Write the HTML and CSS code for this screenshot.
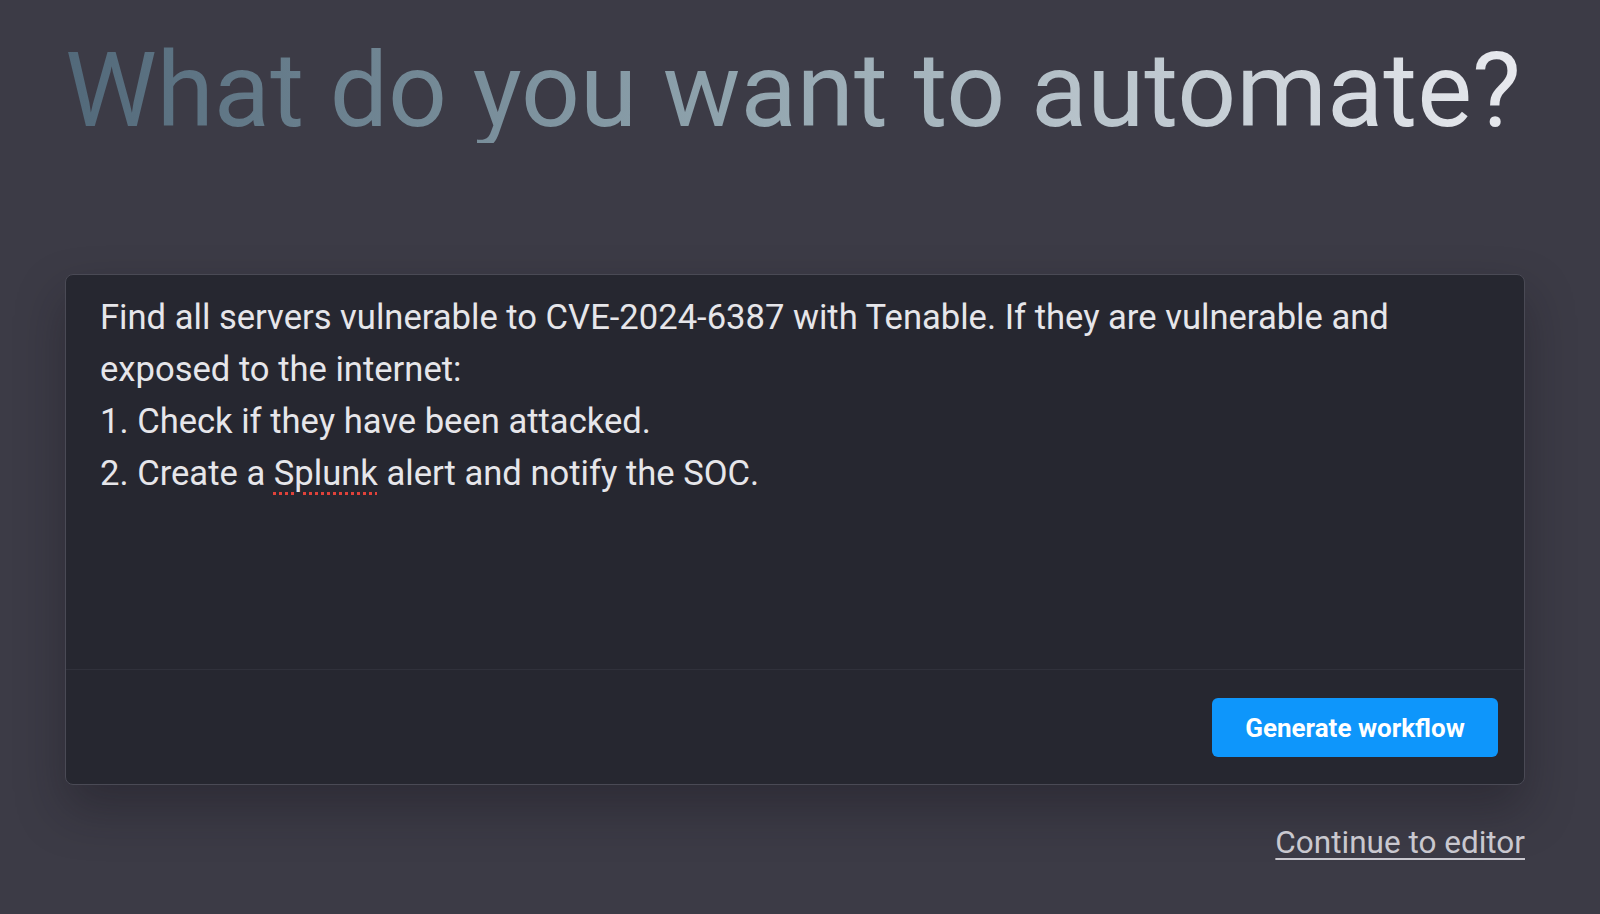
FILE: index.html
```html
<!DOCTYPE html>
<html lang="en">
<head>
<meta charset="utf-8">
<title>What do you want to automate?</title>
<link rel="stylesheet" href="styles.css">
</head>
<body>
<main class="page">
  <h1 class="title">What do you want to automate?</h1>
  <section class="card">
    <div class="prompt">
      <p class="line">Find all servers vulnerable to CVE-2024-6387 with Tenable. If they are vulnerable and exposed to the internet:</p>
      <p class="line">1. Check if they have been attacked.</p>
      <p class="line">2. Create a <span class="misspelled">Splunk</span> alert and notify the SOC.</p>
    </div>
    <div class="card-footer">
      <button class="btn-primary" type="button">Generate workflow</button>
    </div>
  </section>
  <div class="links">
    <a class="link" href="#">Continue to editor</a>
  </div>
</main>
</body>
</html>
```
FILE: styles.css
```css
* { box-sizing: border-box; }
html, body { margin: 0; padding: 0; }
body {
  background: #3c3b46;
  font-family: Roboto, "Liberation Sans", Arial, sans-serif;
  width: 1600px;
  height: 914px;
  overflow: hidden;
}
.page {
  padding: 38px 0 0 65px;
  width: 1525px;
}
.title {
  margin: 0;
  width: max-content;
  font-size: 103.5px;
  font-weight: 400;
  line-height: 105px;
  letter-spacing: 0;
  background: linear-gradient(90deg, #52697a 0%, #8fa3ad 45%, #e8e9ee 100%);
  -webkit-background-clip: text;
  background-clip: text;
  color: transparent;
  white-space: nowrap;
}
.card {
  margin-top: 131px;
  background: #262730;
  border: 1px solid #4a4a55;
  border-radius: 8px;
  box-shadow: 0 24px 48px rgba(20, 18, 26, 0.35);
  display: flex;
  flex-direction: column;
}
.prompt {
  height: 394px;
  padding: 16px 34px 0 34px;
  color: #e6e6ea;
  font-size: 34.6px;
  line-height: 52px;
}
.line { margin: 0; }
.misspelled {
  text-decoration: underline dotted #e0423a;
  text-decoration-thickness: 3px;
  text-underline-offset: 7px;
}
.card-footer {
  border-top: 1px solid #30313b;
  display: flex;
  justify-content: flex-end;
  padding: 28px 26px 27px 0;
}
.btn-primary {
  width: 286px;
  height: 59px;
  background: #0e96fb;
  color: #ffffff;
  border: none;
  border-radius: 6px;
  font-family: Roboto, "Liberation Sans", Arial, sans-serif;
  font-weight: 700;
  font-size: 26px;
  cursor: pointer;
}
.links {
  display: flex;
  justify-content: flex-end;
  margin-top: 41px;
}
.link {
  color: #c9c8cf;
  font-size: 31.5px;
  line-height: 34px;
  text-decoration: underline;
  text-decoration-thickness: 2px;
  text-underline-offset: 5px;
}
```
